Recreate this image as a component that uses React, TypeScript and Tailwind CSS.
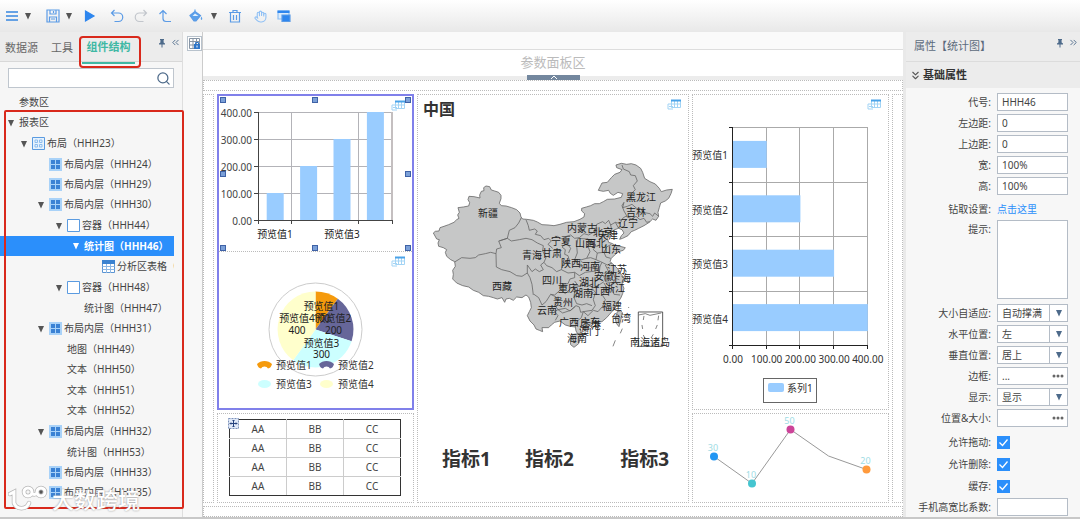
import React, {ReactNode} from 'react';
import {ChevronsDown, ChevronsLeft, ChevronsRight, Hand, Search} from 'lucide-react';

type NodeIcon = 'layout' | 'inner' | 'box' | 'table';

interface TreeNode {
  level: number;
  label: string;
  icon?: NodeIcon;
  open?: boolean;
  tall?: boolean;
  selected?: boolean;
}

const indents = ['pl-[7px]', 'pl-[20px]', 'pl-[37px]', 'pl-[55px]', 'pl-[72px]', 'pl-[90px]'];

const nodes: TreeNode[] = [
  {level: 0, label: '参数区'},
  {level: 0, label: '报表区', open: true, tall: true},
  {level: 1, label: '布局（HHH23）', icon: 'layout', open: true, tall: true},
  {level: 2, label: '布局内层（HHH24）', icon: 'inner'},
  {level: 2, label: '布局内层（HHH29）', icon: 'inner'},
  {level: 2, label: '布局内层（HHH30）', icon: 'inner', open: true, tall: true},
  {level: 3, label: '容器（HHH44）', icon: 'box', open: true, tall: true},
  {level: 4, label: '统计图（HHH46）', open: true, selected: true},
  {level: 5, label: '分析区表格（HHH47）', icon: 'table', tall: true},
  {level: 3, label: '容器（HHH48）', icon: 'box', open: true, tall: true},
  {level: 4, label: '统计图（HHH47）'},
  {level: 2, label: '布局内层（HHH31）', icon: 'inner', open: true, tall: true},
  {level: 3, label: '地图（HHH49）'},
  {level: 3, label: '文本（HHH50）', tall: true},
  {level: 3, label: '文本（HHH51）'},
  {level: 3, label: '文本（HHH52）', tall: true},
  {level: 2, label: '布局内层（HHH32）', icon: 'inner', open: true, tall: true},
  {level: 3, label: '统计图（HHH53）'},
  {level: 2, label: '布局内层（HHH33）', icon: 'inner'},
  {level: 2, label: '布局内层（HHH35）', icon: 'inner', open: true, tall: true},
  {level: 3, label: '布局内层（HHH36）', icon: 'inner'},
];

const provinces: [string, number, number][] = [
  ['新疆', 488, 213], ['西藏', 502, 286], ['青海', 532, 255], ['甘肃', 552, 253],
  ['宁夏', 561, 241], ['内蒙古', 582, 228], ['黑龙江', 641, 197], ['吉林', 636, 212],
  ['辽宁', 628, 223], ['北京', 603, 232], ['天津', 608, 235], ['山西', 585, 243],
  ['河北', 596, 243], ['山东', 611, 249], ['陕西', 571, 263], ['河南', 590, 266],
  ['江苏', 617, 269], ['安徽', 604, 276], ['上海', 621, 278], ['四川', 552, 280],
  ['湖北', 589, 282], ['重庆', 568, 288], ['浙江', 615, 288], ['湖南', 583, 293],
  ['江西', 600, 291], ['贵州', 563, 302], ['福建', 612, 306], ['云南', 547, 310],
  ['台湾', 621, 318], ['广西', 569, 322], ['广东', 590, 322], ['香港', 591, 325],
  ['澳门', 589, 331], ['海南', 577, 338], ['南海诸岛', 650, 342],
];

const Tri = ({className = 'fill-[#555]'}: {className?: string}) => (
  <svg viewBox="0 0 8 8" className={`h-2 w-2 ${className}`}><path d="M1 1h6L4 7.5z"/></svg>
);

const Pin = () => (
  <svg viewBox="0 0 8 10" className="h-2.5 w-2 fill-[#4d6a8a]">
    <path d="M2 1h4v1H5.600v2.500L7 5.500V6.500H4.500V9.500h-1V6.500H1V5.500L2.400 4.500V2H2z"/>
  </svg>
);

const LinkedTable = () => (
  <svg viewBox="0 0 14 11" className="absolute top-[4px] right-[7px] h-[11px] w-[14px]">
    <path d="M4.500 1.500h9v7h-9zM4.500 5h9M7.500 2v6.500M10.500 2v6.500M4 5H1v5h5M2 7.500h4" fill="none" stroke="#a3d4f5"/>
    <path d="M4 .5h10v2H4z" fill="#4aa3e8"/>
  </svg>
);

const TreeIcon = ({icon}: {icon: NodeIcon}) => (
  <svg viewBox="0 0 13 13" className="mr-0.5 h-[13px] w-[13px] shrink-0">
    {icon === 'layout' && <>
      <path d="M.5.5h12v12H.5z" fill="#e6f2fd" stroke="#5b9be0"/>
      <path d="M3 3h2.500v2.500H3zM7.500 3H10v2.500H7.500zM3 7.500h2.500V10H3zM7.500 7.500H10V10H7.500z" fill="none" stroke="#8dbdee"/>
    </>}
    {icon === 'inner' && <>
      <path d="M0 0h13v13H0z" fill="#a9d2f8"/>
      <path d="M2 2h4v4H2zM7 2h4v4H7zM2 7h4v4H2zM7 7h4v4H7z" fill="#3b82d4"/>
    </>}
    {icon === 'box' && <path d="M.5.5h12v12H.5z" fill="#fff" stroke="#5b9be0"/>}
    {icon === 'table' && <>
      <path d="M.5.5h12v12H.5z" fill="#fff" stroke="#5b94d2"/>
      <path d="M.5 6.500h12M.5 9.500h12M4.500 4v9M8.500 4v9" stroke="#8fb8e4"/>
      <path d="M0 0h13v4H0z" fill="#3b82d0"/>
    </>}
  </svg>
);

const ToolButton = ({label, className = '', children}: {label: string, className?: string, children: ReactNode}) => (
  <button type="button" aria-label={label} className={`flex h-6 w-6 items-center justify-center ${className}`}>
    <svg viewBox="0 0 14 14" className="h-[14px] w-[14px]" fill="none" stroke="#5b9be6" strokeWidth="1.2">
      {children}
    </svg>
  </button>
);

const DropButton = ({label, className = ''}: {label: string, className?: string}) => (
  <button type="button" aria-label={label} className={`flex h-6 w-2 items-center ${className}`}><Tri/></button>
);

const Toolbar = () => (
  <header className="flex h-8 shrink-0 items-center bg-linear-to-b from-white to-[#e8e8e8]">
    <ToolButton label="菜单"><path d="M1 3h12M1 7h12M1 11h12" stroke="#3787e0" strokeWidth="1.600"/></ToolButton>
    <DropButton label="菜单选项"/>
    <ToolButton label="保存" className="ml-[9px]">
      <path d="M1 1h12v12H1zM4 1v4h6V1M3.500 13V8h7v5M5 10h4M7.500 2v2"/>
    </ToolButton>
    <DropButton label="保存选项"/>
    <ToolButton label="预览" className="ml-[5px]"><path d="M2.500 2v10L11 7z" fill="#2e86ee" stroke="#2e86ee"/></ToolButton>
    <ToolButton label="撤销" className="ml-[3px]"><path d="M4.500 1L1.500 4l3 3M2 4h6.500a4.200 4.200 0 0 1 0 8.500H4.500"/></ToolButton>
    <ToolButton label="重做"><path d="M9.500 1l3 3-3 3M12 4H5.500a4.200 4.200 0 0 0 0 8.500H9.500" stroke="#c2c6cc"/></ToolButton>
    <ToolButton label="返回上级"><path d="M1.500 5L5 1.500 8.500 5M5 2v7.500q0 3 3 3h5"/></ToolButton>
    <ToolButton label="填充" className="ml-[7px]">
      <path d="M1 6.500L6 2.500l5.500 4L7 12H5z" fill="#5ba0ea"/>
      <path d="M6 2.500V.5" stroke="#5ba0ea"/>
      <path d="M3.500 7h6L6 4.500z" fill="#e4f1fd" stroke="none"/>
      <path d="M12.500 7.500q1.500 2.500 0 3.500-1.500-1 0-3.500z" fill="#5ba0ea" stroke="none"/>
    </ToolButton>
    <DropButton label="填充选项" className="ml-[2px]"/>
    <ToolButton label="删除" className="ml-[5px]">
      <path d="M1 3.500h12M5 3.500V1.500h4v2M2.500 3.500v9.500h9V3.500M5.500 6v5M8.500 6v5"/>
    </ToolButton>
    <button type="button" aria-label="拖动" className="ml-px flex h-6 w-6 items-center justify-center">
      <Hand size={13} strokeWidth={2} className="text-[#8fc0f5]"/>
    </button>
    <ToolButton label="面板">
      <path d="M1 2h11v8H1z" fill="#dcecfc" stroke="#8dc0f5"/>
      <path d="M.5 1.500h12v2.500H.5z" fill="#2e86ee" stroke="none"/>
      <path d="M5 6h8v6.500H5z" fill="#2e86ee"/>
    </ToolButton>
  </header>
);

const StructurePanel = () => (
  <aside className="relative flex w-[183px] shrink-0 flex-col border-r border-[#dedede] bg-[#f6f6f6]">
    <div className="flex h-[30px] shrink-0 items-center border-b border-[#d8d8d8] bg-[#ececec] pl-[5px] text-[11px] text-[#666]">
      <button type="button" className="h-8 w-[46px] self-start text-left">数据源</button>
      <button type="button" className="h-8 w-[31px] self-start text-left">工具</button>
      <button type="button"
        className="h-8 w-[53px] self-start border-b-2 border-[#3fb8a4] text-center font-bold text-[#3fb8a4]">
        组件结构
      </button>
      <div className="ml-auto flex items-center gap-1 pb-2 pr-px">
        <Pin/>
        <ChevronsLeft size={11} strokeWidth={2} className="text-[#4d6a8a]"/>
      </div>
    </div>
    <div className="relative mx-2 mt-1.5 shrink-0">
      <input type="text" aria-label="搜索" className="block h-5 w-[166px] border border-[#bfc6ce] bg-white px-1"/>
      <Search size={15} strokeWidth={2} className="absolute top-[3px] left-[148px] text-[#4d6a8a]"/>
    </div>
    <ul role="tree" aria-label="组件结构" className="mt-1 mr-2 mb-2 min-h-0 flex-1 basis-0 overflow-hidden">
      {nodes.map((node, k) => (
        <li key={k} role="treeitem" aria-selected={!!node.selected}
          className={`flex items-center whitespace-nowrap ${indents[node.level]} ${node.tall ? 'h-[21px]' : 'h-5'} ${node.selected ? 'bg-[#2b8ffb] font-bold text-white' : ''}`}>
          <span className="w-3 shrink-0">
            {node.open && <Tri className={node.selected ? 'fill-white' : 'fill-[#555]'}/>}
          </span>
          {node.icon && <TreeIcon icon={node.icon}/>}
          {node.label}
        </li>
      ))}
    </ul>
    <div className="pointer-events-none absolute top-1 left-[79px] h-8 w-[62px] rounded-sm border-2 border-[#d9291c]"/>
    <div className="pointer-events-none absolute top-[78px] -right-0.5 bottom-2 left-1 rounded-xs border-2 border-[#d9291c]"/>
    <div className="pointer-events-none absolute bottom-1 left-2 flex items-center gap-1">
      <svg viewBox="0 0 40 28" className="h-7 w-10" fill="none" strokeLinecap="round">
        <path d="M2 9l4-2v11a8 8 0 0 0 15 0M16 7a4 4 0 1 0 8 0a4 4 0 1 0-8 0M29 7a4 4 0 1 0 8 0a4 4 0 1 0-8 0M24 8q2 3 5 0" stroke="#b8b8b8" strokeWidth="4.500"/>
        <path d="M2 9l4-2v11a8 8 0 0 0 15 0M16 7a4 4 0 1 0 8 0a4 4 0 1 0-8 0M29 7a4 4 0 1 0 8 0a4 4 0 1 0-8 0M24 8q2 3 5 0" stroke="#fff" strokeWidth="3"/>
      </svg>
      <span className="text-[22px] leading-7 font-medium text-white [text-shadow:0_0_2px_#888]">大数跨境</span>
    </div>
  </aside>
);

const handles = [[223, 100], [315, 100], [408, 100], [223, 174], [408, 174], [223, 248], [315, 248], [408, 248]];

const ColumnChart = () => (
  <div className="relative border-b border-dotted border-[#bbb]">
    <svg viewBox="219 96 193 155" className="block w-full overflow-visible text-[10px]">
      <path d="M258.500 112.500H392M258.500 139.500H392M258.500 166.500H392M258.500 193.500H392M291.500 112.500v108M358.500 112.500v108" stroke="#b3b3b8" fill="none"/>
      <path d="M392 112v108" stroke="#c4bfc0" strokeWidth="2"/>
      {[1, 2, 3, 4].map(v => (
        <rect key={v} x={233.300 + v * 33.400} y={220 - v * 27} width="17" height={v * 27} fill="#99ccff"/>
      ))}
      <path d="M258.500 112v112M254 112.500h4M254 139.500h4M254 166.500h4M254 193.500h4M254 220.500H392.500M291.500 220v4M358.500 220v4M392.500 220v4" stroke="#444" fill="none"/>
      <g fill="#444" textAnchor="end">
        {[4, 3, 2, 1, 0].map(v => <text key={v} x="252" y={225 - v * 27}>{v * 100}.00</text>)}
      </g>
      <g fill="#222" textAnchor="middle">
        <text x="275" y="238">预览值1</text>
        <text x="342" y="238">预览值3</text>
      </g>
      {handles.map(([x, y]) => (
        <rect key={`${x}-${y}`} x={x - 2.500} y={y - 2.500} width="5" height="5" fill="#7ba0d8" stroke="#3f62a6"/>
      ))}
    </svg>
    <LinkedTable/>
  </div>
);

const Fan = ({x, y, fill}: {x: number, y: number, fill: string}) => (
  <path d={`M${x - 7.500} ${y - 1}q3-3 7.500-3t7.500 3q-1 4-4 4.500q-1-2-3.500-2t-3.500 2q-3-.5-4-4.500z`} fill={fill}/>
);

const PieChart = () => (
  <div className="relative">
    <svg viewBox="219 252 193 156" className="block w-full text-[10px]">
      <circle cx="315.500" cy="329.500" r="46.500" fill="#fff" stroke="#ccc"/>
      <path d="M315.500 329.500V291.500A38 38 0 0 1 337.800 298.800z" fill="#f59a0c"/>
      <path d="M315.500 329.500L337.800 298.800A38 38 0 0 1 351.600 341.200z" fill="#666699"/>
      <path d="M315.500 329.500L351.600 341.200A38 38 0 0 1 293.200 360.200z" fill="#ccffff"/>
      <path d="M315.500 329.500L293.200 360.200A38 38 0 0 1 315.500 291.500z" fill="#ffffcc"/>
      <g fill="#222" textAnchor="middle">
        <text x="321.500" y="310">预览值1</text>
        <text x="321.500" y="322">100</text>
        <text x="333.500" y="322">预览值2</text>
        <text x="333.500" y="334">200</text>
        <text x="297" y="322">预览值4</text>
        <text x="297" y="334">400</text>
        <text x="321.500" y="347">预览值3</text>
        <text x="321.500" y="358">300</text>
      </g>
      <Fan x={264.500} y={365} fill="#f59a0c"/>
      <Fan x={326.500} y={365} fill="#666699"/>
      <ellipse cx="264.500" cy="384" rx="6.500" ry="4" fill="#ccffff"/>
      <ellipse cx="326.500" cy="384" rx="6.500" ry="4" fill="#ffffcc"/>
      <g fill="#333">
        <text x="276" y="369">预览值1</text>
        <text x="338" y="369">预览值2</text>
        <text x="276" y="388">预览值3</text>
        <text x="338" y="388">预览值4</text>
      </g>
    </svg>
    <LinkedTable/>
  </div>
);

const DataTable = () => (
  <div className="relative h-[90px] border border-dotted border-[#bbb] pt-[5px] pr-3 pl-[11px]">
    <table className="w-full table-fixed border-collapse text-center">
      <tbody>
        {[0, 1, 2, 3].map(row => (
          <tr key={row} className="h-[19px]">
            {['AA', 'BB', 'CC'].map(cell => (
              <td key={cell}
                className={`border border-r-[#ccc] border-l-[#ccc] p-0 leading-4 first:border-l-[#333] last:border-r-[#333] ${row === 0 ? 'border-t-[#333]' : 'border-t-[#ccc]'} ${row === 3 ? 'border-b-[#333]' : 'border-b-[#ccc]'}`}>
                {cell}
              </td>
            ))}
          </tr>
        ))}
      </tbody>
    </table>
    <svg viewBox="0 0 11 11" className="absolute top-1 left-2.5 h-[11px] w-[11px]">
      <path d="M.5.5h10v10H.5z" fill="#dfe8f8" stroke="#7d93bb" strokeDasharray="2 1"/>
      <path d="M5.500 2v7M2 5.500h7M4.500 3l1-1 1 1M4.500 8l1 1 1-1M3 4.500l-1 1 1 1M8 4.500l1 1-1 1" fill="none" stroke="#23407c"/>
    </svg>
  </div>
);

const ChinaMap = () => (
  <svg viewBox="418 120 270 233" className="block w-full text-[10px]">
    <g transform="translate(420 150) scale(.3333)" stroke="#666" strokeWidth="2.400" strokeLinejoin="round" fill="none">
      <path fill="#c6c7c7" d="M40 246L46 241 57 240 60 230 72 226 86 221 102 214 110 206 117 202 113 192 118 184 114 170 130 168 146 165 149 155 144 146 147 136 162 137 180 141 179 132 184 121 192 119 191 110 198 105 209 107 214 117 224 120 236 124 243 133 243 143 238 157 244 164 258 165 275 170 290 176 300 186 303 198 308 204 320 205 340 208 352 213 366 221 384 222 402 224 420 220 440 214 462 212 480 205 492 198 494 188 485 180 485 172 499 168 512 164 524 158 538 158 550 152 562 145 584 144 604 139 608 128 594 124 580 133 571 127 566 118 550 121 535 118 540 108 546 96 562 94 574 80 584 70 600 64 606 56 590 50 588 42 604 37 620 40 634 38 648 42 662 52 668 64 674 82 690 92 706 99 718 112 724 122 740 117 757 115 753 128 746 142 736 150 722 156 718 170 714 184 716 196 708 208 698 204 688 214 672 224 656 232 644 238 634 242 624 254 608 262 599 265 604 254 612 246 606 236 596 232 584 236 574 244 570 254 562 262 566 274 578 278 586 284 600 286 616 290 610 298 596 302 584 312 574 322 570 332 582 342 594 354 600 366 612 380 614 390 606 398 612 412 608 428 602 442 592 456 586 470 574 484 560 500 546 512 528 514 510 520 494 526 480 532 484 544 474 550 468 540 466 528 450 526 436 522 420 510 404 514 394 522 386 530 366 530 368 542 358 538 348 534 342 522 330 510 322 494 328 482 334 470 332 454 326 438 318 432 306 440 290 438 280 448 268 442 258 444 254 454 246 440 232 444 220 440 206 436 190 434 176 424 160 418 146 408 128 404 110 396 98 384 100 370 98 358 106 346 104 332 92 326 80 316 76 304 80 296 70 290 56 286 54 276 58 266 50 264z"/>
      <path d="M104 333L125 320 150 322 166 320 176 312 196 308 212 304 228 308 230 294 244 290 236 270 262 262 268 238 285 230 296 216 304 200M228 308L229 348 245 356 270 362 290 374 306 376 322 366 330 380 336 400 340 432M238 270L262 262 274 270 298 266 318 262 336 266 352 276 370 284 368 300 378 320 372 334 362 342 370 356 358 362 346 354 336 362 322 342 322 366M318 206L325 224 328 238 344 234 352 240 346 250 362 254 372 266 386 262 394 270 384 280 398 292M394 262L412 256 426 264 440 256 452 252 464 262 478 260 492 248 506 252 520 244 528 232 530 220 548 212 556 218 566 208 572 222 586 214 600 218 608 202 620 194 612 180 606 164 612 154"/>
      <path d="M606 42L610 54 628 62 632 72 646 74 652 90 640 104 646 116 634 128 630 142 618 150M612 154L608 170 622 166 636 160 650 172 664 174 668 184 690 188 698 196 704 186 716 196M618 196L636 204 648 196 660 206 672 202 680 214 690 212M572 222L576 240M586 214L596 232"/>
      <path d="M424 356L430 334 448 328 444 314 434 310 436 296 426 288 440 276 452 292 446 306M474 262L470 284 472 306 464 326 480 344 496 352 528 348M474 262L500 264 512 272 504 286 510 302 500 322 478 328M512 272L528 282 520 296 532 306 528 326 512 320 500 322M532 306L552 304 560 288 574 280M552 304L558 318 572 322M528 326L546 334 540 346 528 360 528 348M546 334L562 342 576 336M556 342L566 362 580 366 586 382 598 386M540 346L538 364 552 376 556 392 580 396 586 382M424 356L410 362 396 350 380 344 372 334M424 356L444 366 464 364 478 374 496 364 528 360M464 364L464 380 450 384 444 398 428 400 422 416 436 428 452 412 464 404 476 406 464 390M476 406L500 400 520 410 540 400 552 392M464 420L462 440 470 458 486 462 500 458 516 464M516 412L526 424 520 446 526 464 516 478 490 482M552 396L560 410 576 414 582 430 600 432M560 410L548 434 556 446 548 466 534 482 520 478M422 416L404 432 392 430 378 452 366 462 356 440 342 430M392 430L408 438 414 454 404 462 414 476 436 472 450 480 466 466M414 476L404 482 414 494 406 508M414 476L428 486 452 478 468 464 478 468 482 484 490 482 484 500 470 512 466 528M490 482L504 494 520 478"/>
      <path fill="#c6c7c7" d="M450 562l10-12 16-2 6 10-6 20-14 11-10-8zM592 482l10-3 5 6-4 20-6 22-8-10-3-14z"/>
      <path d="M655 483h73v103h-73z" stroke="#333"/>
      <path d="M656 492l20-4 14 5 34-7M672 495l-2 12M666 522l2 12M670 552l6 12M716 494l-2 14M712 522l-5 12M700 550l-6 10M607 533l-6 14M586 568l-7 18M626 468v3M550 534v3"/>
    </g>
    <g fill="#222" textAnchor="middle">
      {provinces.map(([name, x, y]) => <text key={name} x={x} y={y + 3}>{name}</text>)}
    </g>
  </svg>
);

const BarChart = () => (
  <div className="relative border border-dotted border-[#bbb]">
    <svg viewBox="693 95 195 314" className="block w-full overflow-visible text-[10px]">
      <path d="M733 127.500H867.500M733 182.500H867.500M733 236.500H867.500M733 291.500H867.500M766.500 127v218M799.500 127v218M833.500 127v218M867.500 127v218" stroke="#aaa" fill="none"/>
      {[1, 2, 3, 4].map(v => (
        <rect key={v} x="733" y={86.500 + v * 54.400} width={v * 33.700} height="27" fill="#99ccff"/>
      ))}
      <path d="M732.500 127v222M729 127.500h4M729 182.500h4M729 236.500h4M729 291.500h4M729 345.500H867.500M766.500 345v4M799.500 345v4M833.500 345v4M867.500 345v4" stroke="#222" fill="none"/>
      <g fill="#333" textAnchor="end">
        {[1, 2, 3, 4].map(v => <text key={v} x="728" y={105 + v * 54.400}>预览值{v}</text>)}
      </g>
      <g fill="#333" textAnchor="middle">
        {[0, 1, 2, 3, 4].map(v => <text key={v} x={733 + v * 33.700} y="363">{v * 100}.00</text>)}
      </g>
      <rect x="763.500" y="378.500" width="53" height="24" fill="#fff" stroke="#666"/>
      <rect x="768" y="383" width="16" height="9" rx="2" fill="#99ccff"/>
      <text x="787" y="392" fill="#333">系列1</text>
    </svg>
    <LinkedTable/>
  </div>
);

const points: [number, number, string, string][] = [
  [714, 456.500, '30', '#2196f3'],
  [752, 483.500, '10', '#45c5d0'],
  [790.500, 429.500, '50', '#cc4499'],
  [866.500, 469.500, '20', '#ff9a3c'],
];

const LineChart = () => (
  <div className="h-[90px] border border-dotted border-[#bbb]">
    <svg viewBox="693 414 195 88" className="block w-full text-[9px]">
      <path d="M714 456.500L752 483.500L790.500 429.500L828.500 456L866.500 469.500" fill="none" stroke="#999"/>
      {points.map(([x, y, label, fill]) => (
        <g key={label} fill={fill}>
          <circle cx={x} cy={y} r="4"/>
          <text x={x - 1} y={y - 6} textAnchor="middle" fill="#a0dce4">{label}</text>
        </g>
      ))}
    </svg>
  </div>
);

const Canvas = () => (
  <main className="flex min-w-0 flex-1 flex-col bg-white">
    <div className="h-[18px] shrink-0 border-b border-[#ddd] bg-[#fafafa]"/>
    <div className="flex h-[30px] shrink-0 flex-col items-center border-b-4 border-[#ececec]">
      <span className="h-[25px] text-[13px] leading-[25px] text-[#bbb]">参数面板区</span>
      <button type="button" aria-label="展开参数面板" className="z-10 h-[5px] w-[53px] shrink-0 bg-[#73879e]">
        <svg viewBox="0 0 53 5" className="block h-[5px] w-full"><path d="M24 4l3-3 3 3" fill="none" stroke="#fff"/></svg>
      </button>
    </div>
    <div className="h-[11px] shrink-0 border border-dotted border-[#bbb]"/>
    <div className="my-[3px] grid grid-cols-[11px_minmax(0,197fr)_minmax(0,272fr)_minmax(0,197fr)_11px] gap-[3px]">
      <div className="border border-dotted border-[#bbb]"/>
      <div className="flex flex-col gap-[3px]">
        <div className="border-2 border-[#8080ea]">
          <ColumnChart/>
          <PieChart/>
        </div>
        <DataTable/>
      </div>
      <div className="relative flex flex-col border border-dotted border-[#bbb]">
        <h2 className="pt-0.5 pl-[5px] text-[16px] leading-6 font-bold text-[#333]">中国</h2>
        <ChinaMap/>
        <div className="mt-[91px] flex justify-between pr-[19px] pl-6 text-[19px] leading-7 font-bold text-[#333]">
          <span>指标1</span>
          <span className="mr-3">指标2</span>
          <span>指标3</span>
        </div>
        <LinkedTable/>
      </div>
      <div className="flex flex-col gap-[3px]">
        <BarChart/>
        <LineChart/>
      </div>
      <div className="border border-dotted border-[#bbb]"/>
    </div>
    <div className="h-[11px] shrink-0 border border-dotted border-[#bbb]"/>
  </main>
);

const fieldClass = 'h-[18px] w-[71px] border border-[#b4bcc6] bg-white text-[#444]';

const Field = ({id, label, className = 'h-[18px] mb-[3px]', children}: {id: string, label: string, className?: string, children: ReactNode}) => (
  <div className={`flex ${className}`}>
    <label htmlFor={id} className="mr-1.5 w-[85px] shrink-0 text-right leading-[18px] whitespace-nowrap">{label}:</label>
    {children}
  </div>
);

const TextField = ({id, label, value}: {id: string, label: string, value: string}) => (
  <Field id={id} label={label}>
    <input id={id} type="text" defaultValue={value} className={`${fieldClass} px-1`}/>
  </Field>
);

const SelectField = ({id, label, value}: {id: string, label: string, value: string}) => (
  <Field id={id} label={label}>
    <div className="relative">
      <select id={id} className={`${fieldClass} block appearance-none px-1 leading-4`}><option>{value}</option></select>
      <span className="pointer-events-none absolute top-px right-px flex h-4 w-[18px] items-center justify-center border-l border-[#b4bcc6]">
        <Tri className="fill-[#4d6a8a]"/>
      </span>
    </div>
  </Field>
);

const MoreField = ({id, label, value}: {id: string, label: string, value: string}) => (
  <Field id={id} label={label}>
    <div className="relative">
      <input id={id} type="text" defaultValue={value} className={`${fieldClass} block px-1`}/>
      <button type="button" aria-label={`${label}设置`} className="absolute top-px right-1 flex h-4 items-center">
        <svg viewBox="0 0 12 4" className="h-1 w-3 fill-[#666]">
          <circle cx="2" cy="2" r="1.500"/><circle cx="6" cy="2" r="1.500"/><circle cx="10" cy="2" r="1.500"/>
        </svg>
      </button>
    </div>
  </Field>
);

const CheckField = ({id, label}: {id: string, label: string}) => (
  <Field id={id} label={label} className="h-[22px] items-center">
    <span className="relative h-[13px]">
      <input id={id} type="checkbox" defaultChecked
        className="block h-[13px] w-[13px] appearance-none border border-[#2b8ffb] bg-white checked:bg-[#2b8ffb]"/>
      <svg viewBox="0 0 13 13" className="pointer-events-none absolute inset-0 h-[13px] w-[13px]">
        <path d="M2.500 6.500l3 3 5-6" fill="none" stroke="#fff" strokeWidth="1.300"/>
      </svg>
    </span>
  </Field>
);

const PropertyPanel = () => (
  <aside className="w-[177px] shrink-0 overflow-hidden border-l-3 border-[#e9e9e9] bg-[#f7f7f7]">
    <div className="flex h-[30px] items-center justify-between border-b border-[#dcdcdc] bg-[#ececec] pl-2 text-[11px] text-[#5c6b7c]">
      属性【统计图】
      <div className="flex items-center gap-1 pr-px pb-2">
        <Pin/>
        <ChevronsRight size={11} strokeWidth={2} className="text-[#4d6a8a]"/>
      </div>
    </div>
    <h3 className="flex h-[26px] items-center bg-[#ececec] pl-[3px] text-[11px] font-bold text-[#333]">
      <ChevronsDown size={13} strokeWidth={2} className="mr-px text-[#555]"/>基础属性
    </h3>
    <form className="pt-[5px]">
      <TextField id="code" label="代号" value="HHH46"/>
      <TextField id="left" label="左边距" value="0"/>
      <TextField id="top" label="上边距" value="0"/>
      <TextField id="width" label="宽" value="100%"/>
      <TextField id="height" label="高" value="100%"/>
      <Field id="drill" label="钻取设置" className="h-[22px] items-center">
        <a id="drill" href="#drill" className="text-[#2b8ffb]">点击这里</a>
      </Field>
      <Field id="tip" label="提示" className="mb-[5px]">
        <textarea id="tip" className="block h-[79px] w-[71px] resize-none border border-[#b4bcc6] bg-white"/>
      </Field>
      <SelectField id="fit" label="大小自适应" value="自动撑满"/>
      <SelectField id="halign" label="水平位置" value="左"/>
      <SelectField id="valign" label="垂直位置" value="居上"/>
      <MoreField id="border" label="边框" value="..."/>
      <SelectField id="display" label="显示" value="显示"/>
      <MoreField id="position" label="位置&大小" value=""/>
      <div className="py-px">
        <CheckField id="drag" label="允许拖动"/>
        <CheckField id="remove" label="允许删除"/>
        <CheckField id="cache" label="缓存"/>
      </div>
      <TextField id="ratio" label="手机高宽比系数" value=""/>
    </form>
  </aside>
);

export default function App() {
  return (
    <div className="flex h-screen flex-col overflow-hidden border-b-2 border-[#c8c8c8] bg-[#f6f6f6] font-['Noto_Sans','Noto_Sans_CJK_SC',sans-serif] text-[10px] text-[#444]">
      <Toolbar/>
      <div className="flex min-h-0 flex-1">
        <StructurePanel/>
        <div className="flex w-5 shrink-0 justify-end border-r border-[#ccc] bg-[#f8f8f8] pt-1">
          <button type="button" aria-label="表格视图" className="flex h-[15px] w-[15px] items-center justify-center border border-[#b8c2cc] bg-white">
            <svg viewBox="0 0 11 11" className="h-[11px] w-[11px]">
              <path d="M.5.5h10v10H.5zM.5 3.500h10M.5 7h10M4 .5v10M7.500.5v10" fill="none" stroke="#8795a5"/>
              <path d="M5 6h6v5H5z" fill="#2f76c8"/><path d="M6.500 6V4.500h3V6" fill="none" stroke="#2f76c8"/><path d="M8 7.500v2" stroke="#fff"/>
            </svg>
          </button>
        </div>
        <Canvas/>
        <PropertyPanel/>
      </div>
    </div>
  );
}
